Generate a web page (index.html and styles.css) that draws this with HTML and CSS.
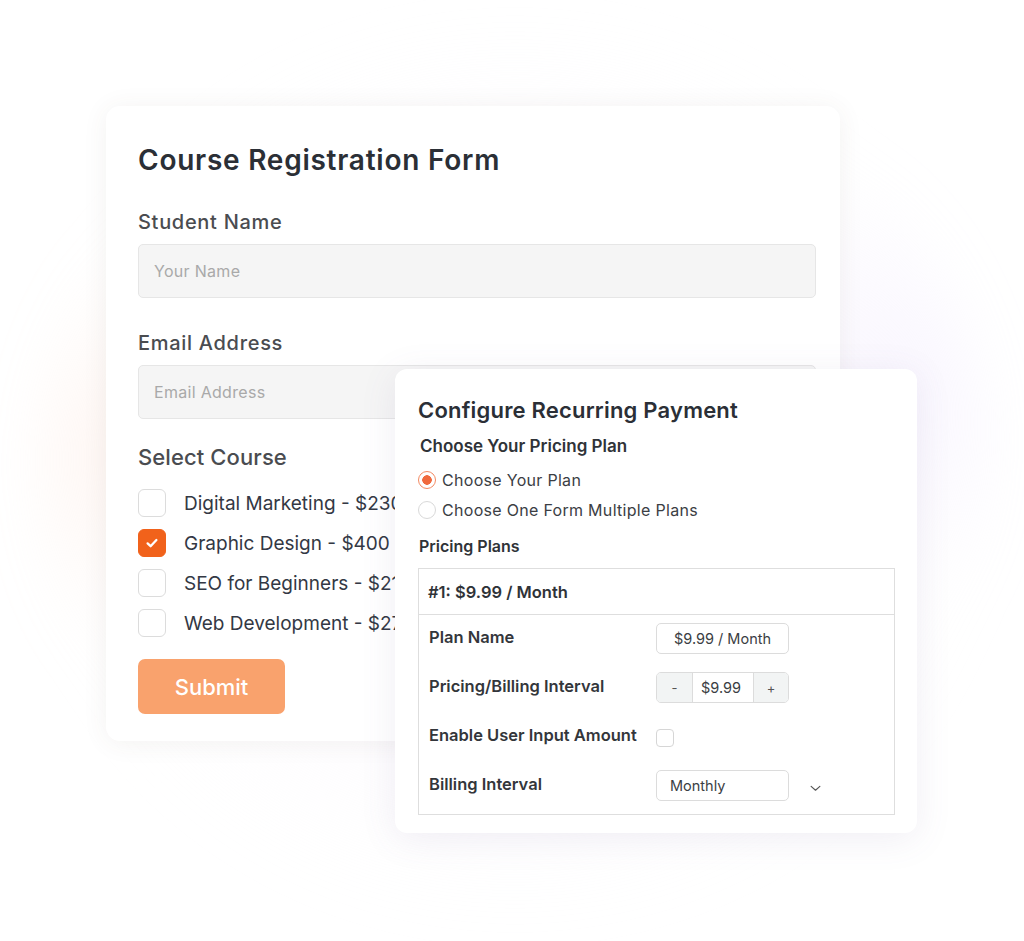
FILE: index.html
```html
<!DOCTYPE html>
<html lang="en">
<head>
<meta charset="utf-8">
<title>Course Registration Form</title>
<link rel="stylesheet" href="styles.css">
</head>
<body>
<div class="stage">
  <div class="glow"></div>

  <section class="card card-main">
    <h1 class="title">Course Registration Form</h1>

    <label class="field-label">Student Name</label>
    <div class="text-input">Your Name</div>

    <label class="field-label field-gap">Email Address</label>
    <div class="text-input">Email Address</div>

    <h2 class="section-label">Select Course</h2>
    <ul class="course-list">
      <li class="course"><span class="check"></span>Digital Marketing - $230</li>
      <li class="course"><span class="check checked"><svg viewBox="0 0 16 16" width="16" height="16"><path d="M3.6 8.4l3 2.8 5.8-6.2" fill="none" stroke="#fff" stroke-width="2.3" stroke-linecap="round" stroke-linejoin="round"/></svg></span>Graphic Design - $400</li>
      <li class="course"><span class="check"></span>SEO for Beginners - $210</li>
      <li class="course"><span class="check"></span>Web Development - $270</li>
    </ul>

    <button class="submit">Submit</button>
  </section>

  <section class="card card-pay">
    <h2 class="pay-title">Configure Recurring Payment</h2>
    <h3 class="pay-sub">Choose Your Pricing Plan</h3>
    <div class="radios">
      <div class="radio-row"><span class="radio on"></span>Choose Your Plan</div>
      <div class="radio-row"><span class="radio"></span>Choose One Form Multiple Plans</div>
    </div>
    <h3 class="pay-sub plans-label">Pricing Plans</h3>

    <div class="plan-box">
      <div class="plan-head">#1: $9.99 / Month</div>
      <div class="plan-body">
        <div class="plan-row">
          <span class="plan-label">Plan Name</span>
          <div class="ctl ctl-center">$9.99 / Month</div>
        </div>
        <div class="plan-row">
          <span class="plan-label">Pricing/Billing Interval</span>
          <div class="stepper">
            <span class="step-btn">-</span>
            <span class="step-val">$9.99</span>
            <span class="step-btn step-plus">+</span>
          </div>
        </div>
        <div class="plan-row">
          <span class="plan-label">Enable User Input Amount</span>
          <span class="small-check"></span>
        </div>
        <div class="plan-row">
          <span class="plan-label">Billing Interval</span>
          <div class="ctl">Monthly</div>
          <svg class="chev" viewBox="0 0 12 8" width="11" height="7"><path d="M1 1.5l5 4.5 5-4.5" fill="none" stroke="#555" stroke-width="1.3" stroke-linecap="round" stroke-linejoin="round"/></svg>
        </div>
      </div>
    </div>
  </section>
</div>
</body>
</html>
```

FILE: styles.css
```css
* { box-sizing: border-box; }
html, body { margin: 0; padding: 0; }
body {
  background: #ffffff;
  font-family: Inter, "Noto Sans", "Liberation Sans", sans-serif;
  color: #2d3139;
}
.stage {
  position: relative;
  width: 1024px;
  height: 941px;
  overflow: hidden;
  padding: 106px 0 0 106px;
}
.glow {
  position: absolute;
  left: 40px;
  top: 30px;
  width: 950px;
  height: 880px;
  border-radius: 50%;
  background:
    radial-gradient(ellipse 240px 300px at 8% 48%, rgba(255, 205, 180, 0.16), transparent 70%),
    radial-gradient(ellipse 260px 320px at 92% 40%, rgba(225, 210, 255, 0.18), transparent 70%),
    radial-gradient(ellipse 50% 50% at 50% 50%, rgba(250, 246, 252, 0.8), rgba(255,255,255,0) 100%);
  filter: blur(30px);
  z-index: 0;
}
.card {
  background: #fff;
  border-radius: 14px;
  position: relative;
  z-index: 1;
}
.card-main {
  width: 734px;
  height: 635px;
  padding: 36px 32px 0 32px;
  box-shadow: 0 2px 26px rgba(90, 70, 60, 0.07);
}
.title {
  margin: 0;
  font-size: 28px;
  line-height: 36px;
  font-weight: 600;
  color: #2b2f36;
  letter-spacing: 0.75px;
}
.field-label {
  display: block;
  margin-top: 32px;
  font-size: 20px;
  line-height: 24px;
  font-weight: 500;
  color: #4a4c50;
  letter-spacing: 0.7px;
}
.field-label.field-gap { margin-top: 33px; }
.text-input {
  margin-top: 10px;
  height: 54px;
  width: 678px;
  background: #f5f5f5;
  border: 1px solid #e6e6e6;
  border-radius: 5px;
  padding: 0 15px;
  display: flex;
  align-items: center;
  font-size: 16px;
  color: #a9a9a9;
  letter-spacing: 0.3px;
}
.section-label {
  margin: 25px 0 0;
  font-size: 22px;
  line-height: 26px;
  font-weight: 500;
  color: #4a4c50;
  letter-spacing: 0.1px;
}
.course-list {
  list-style: none;
  margin: 19px 0 0;
  padding: 0;
  display: flex;
  flex-direction: column;
  gap: 12px;
}
.course {
  display: flex;
  align-items: center;
  gap: 18px;
  height: 28px;
  font-size: 19px;
  color: #333844;
  white-space: nowrap;
}
.check {
  width: 28px;
  height: 28px;
  flex: none;
  border: 1.5px solid #dcdcdc;
  border-radius: 6px;
  background: #fff;
  display: flex;
  align-items: center;
  justify-content: center;
}
.check.checked {
  background: #f1621b;
  border-color: #f1621b;
}
.submit {
  margin-top: 22px;
  width: 147px;
  height: 55px;
  border: none;
  border-radius: 7px;
  background: #f9a26d;
  color: #fff;
  font-family: inherit;
  font-size: 22px;
  font-weight: 500;
  padding: 0;
}

/* payment card */
.card-pay {
  position: absolute;
  left: 395px;
  top: 369px;
  width: 522px;
  height: 464px;
  padding: 27px 22px 0 23px;
  border-radius: 12px;
  z-index: 2;
  box-shadow: 0 6px 36px rgba(110, 90, 150, 0.10);
}
.pay-title {
  margin: 0;
  font-size: 22px;
  line-height: 28px;
  font-weight: 600;
  color: #2b2f36;
  letter-spacing: 0.2px;
}
.pay-sub {
  margin: 11px 0 0 2px;
  font-size: 17px;
  line-height: 22px;
  font-weight: 600;
  color: #2f3338;
}
.radios {
  margin-top: 12px;
  display: flex;
  flex-direction: column;
  gap: 8px;
}
.radio-row {
  display: flex;
  align-items: center;
  gap: 6px;
  height: 22px;
  font-size: 16px;
  color: #3b3e44;
  letter-spacing: 0.3px;
}
.radio {
  width: 18px;
  height: 18px;
  border-radius: 50%;
  border: 1px solid #d9d9d9;
  background: #fff;
  flex: none;
}
.radio.on {
  border: 1.5px solid #f38a62;
  background: radial-gradient(circle, #f06a3e 0 4.5px, #fff 5px);
}
.pay-sub.plans-label {
  margin: 14px 0 0 1px;
  font-size: 16px;
}
.plan-box {
  margin-top: 11px;
  width: 477px;
  border: 1px solid #dedede;
}
.plan-head {
  height: 46px;
  border-bottom: 1px solid #dedede;
  padding: 0 9px;
  display: flex;
  align-items: center;
  font-size: 16.5px;
  font-weight: 600;
  color: #2f3338;
}
.plan-body {
  padding: 8px 0 13px 10px;
  display: flex;
  flex-direction: column;
  gap: 18px;
}
.plan-row {
  display: flex;
  align-items: center;
  height: 31px;
}
.plan-label {
  width: 227px;
  flex: none;
  font-size: 16.5px;
  font-weight: 600;
  color: #33363b;
  margin-top: -3px;
}
.ctl {
  width: 133px;
  height: 31px;
  border: 1px solid #dcdcdc;
  border-radius: 5px;
  display: flex;
  align-items: center;
  padding: 0 13px;
  font-size: 14.5px;
  color: #3b3e44;
}
.ctl-center { justify-content: center; padding: 0; }
.stepper {
  width: 133px;
  height: 31px;
  border: 1px solid #dcdcdc;
  border-radius: 5px;
  display: flex;
  overflow: hidden;
}
.step-btn {
  width: 35px;
  background: #f2f4f4;
  display: flex;
  align-items: center;
  justify-content: center;
  font-size: 13px;
  color: #555;
}
.step-plus { width: 34px; }
.step-val {
  flex: 1;
  border-left: 1px solid #dcdcdc;
  border-right: 1px solid #dcdcdc;
  display: flex;
  align-items: center;
  padding-left: 8px;
  font-size: 14.5px;
  color: #3b3e44;
}
.small-check {
  width: 18px;
  height: 18px;
  border: 1px solid #d6d6d6;
  border-radius: 4px;
  margin-top: 2px;
}
.chev {
  margin-left: 21px;
  margin-top: 6px;
}
```
